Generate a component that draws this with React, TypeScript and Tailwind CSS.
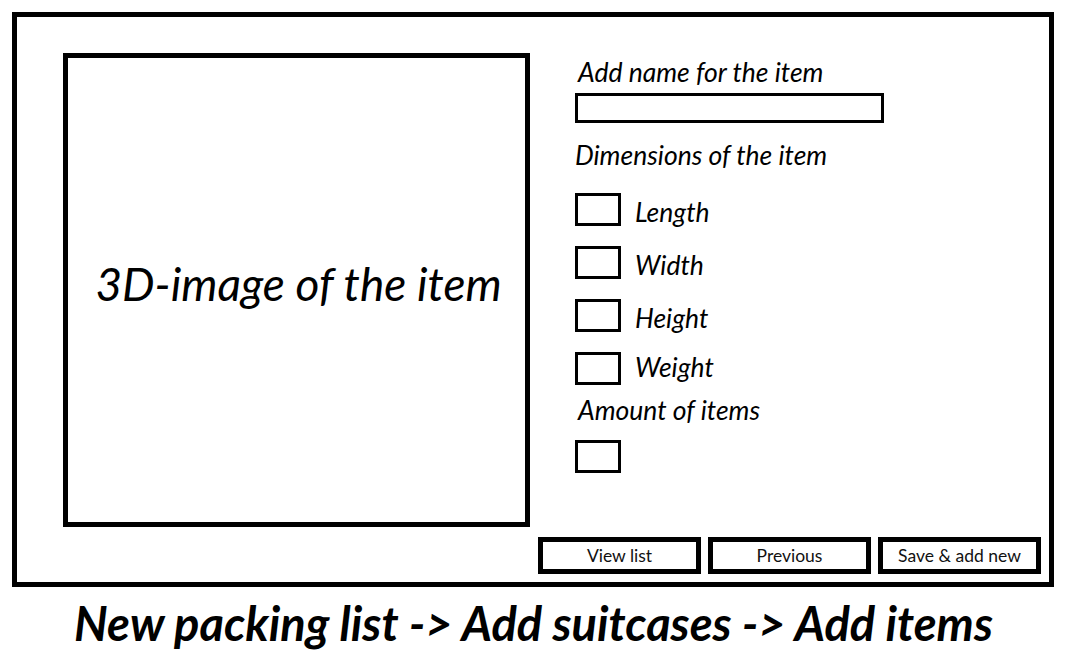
const font = "font-['Lato','Open_Sans',sans-serif]";

function SmallBox() {
  return <div className="w-[46px] h-[33px] border-[3px] border-black shrink-0" />;
}

function DimRow({ label, lift }: { label: string; lift?: boolean }) {
  return (
    <div className="flex items-center gap-[14px] h-[33px] mt-[20px] first:mt-0">
      <SmallBox />
      <span className={`text-[26.5px] leading-[30px] italic ${lift ? 'pb-[4px]' : 'pt-[4px]'}`}>{label}</span>
    </div>
  );
}

function Button({ label }: { label: string }) {
  return (
    <button className="w-[163px] h-[37px] border-[5px] border-black bg-white text-[17.5px] leading-none text-[#111]">
      {label}
    </button>
  );
}

export default function App() {
  return (
    <div className={`w-[1067px] h-[665px] bg-white text-black ${font} overflow-hidden`}>
      <div className="pt-[12px] pl-[12px]">
        {/* wireframe screen */}
        <div className="w-[1042px] h-[575px] border-[5px] border-black flex flex-col">
          <div className="flex pt-[36px] pl-[46px]">
            <div className="w-[467px] h-[474px] border-[5px] border-black flex items-center justify-center">
              <span className="text-[46px] leading-[46px] italic pl-[4px] mb-[12px]">3D-image of the item</span>
            </div>

            <div className="ml-[45px] flex flex-col">
              <div className="mt-[4px] pl-[3px] text-[26.5px] leading-[30px] italic">Add name for the item</div>
              <div className="mt-[6px] w-[309px] h-[30px] border-[3px] border-black" />
              <div className="mt-[17px] text-[26.5px] leading-[30px] italic">Dimensions of the item</div>
              <div className="mt-[23px] flex flex-col">
                <DimRow label="Length" />
                <DimRow label="Width" />
                <DimRow label="Height" />
                <DimRow label="Weight" lift />
              </div>
              <div className="mt-[10px] pl-[3px] text-[26.5px] leading-[30px] italic">Amount of items</div>
              <div className="mt-[15px]">
                <SmallBox />
              </div>
            </div>
          </div>

          <div className="flex justify-end gap-[7px] mt-[10px] pr-[8px]">
            <Button label="View list" />
            <Button label="Previous" />
            <Button label="Save & add new" />
          </div>
        </div>
      </div>

      <div className="text-center mt-[12px] text-[47px] leading-[48px] font-bold italic">
        New packing list -&gt; Add suitcases -&gt; Add items
      </div>
    </div>
  );
}
